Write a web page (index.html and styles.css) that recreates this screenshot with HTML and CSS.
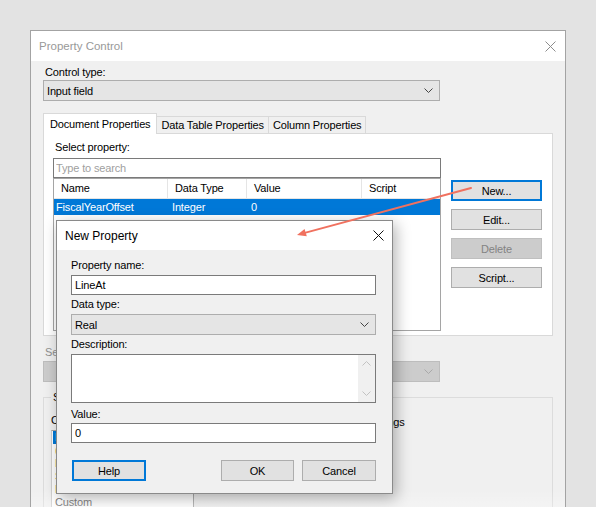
FILE: index.html
```html
<!DOCTYPE html>
<html lang="en">
<head>
    <meta charset="UTF-8" />
    <title>Property Control</title>
    <link rel="stylesheet" href="styles.css">
</head>
<body>
    <div class="window">
        <div class="titlebar">
            <span class="title">Property Control</span>
            <svg class="close-icon" width="11" height="11" viewBox="0 0 11 11">
                <path d="M0.5 0.5L10.5 10.5M10.5 0.5L0.5 10.5" stroke="#8c8c8c" stroke-width="1" fill="none"/>
            </svg>
        </div>

        <div class="window-body">
            <label class="field-label">Control type:</label>
            <div class="select wide">
                <span>Input field</span>
                <svg class="chevron" width="9" height="5" viewBox="0 0 9 5"><path d="M0.5 0.5L4.5 4.5L8.5 0.5" stroke="#444" fill="none"/></svg>
            </div>

            <div class="tabs">
                <div class="tab active">Document Properties</div>
                <div class="tab">Data Table Properties</div>
                <div class="tab">Column Properties</div>
            </div>

            <div class="tab-panel">
                <div class="property-list">
                    <label class="field-label">Select property:</label>
                    <input class="textbox search" type="text" placeholder="Type to search">
                    <div class="listview">
                        <div class="lv-row lv-header">
                            <span>Name</span><span>Data Type</span><span>Value</span><span>Script</span>
                        </div>
                        <div class="lv-row selected">
                            <span>FiscalYearOffset</span><span>Integer</span><span>0</span><span></span>
                        </div>
                    </div>
                </div>
                <div class="side-buttons">
                    <button class="btn default">New...</button>
                    <button class="btn">Edit...</button>
                    <button class="btn" disabled>Delete</button>
                    <button class="btn">Script...</button>
                </div>
            </div>

            <label class="field-label disabled">Set property value through:</label>
            <div class="select wide disabled">
                <span></span>
                <svg class="chevron" width="9" height="5" viewBox="0 0 9 5"><path d="M0.5 0.5L4.5 4.5L8.5 0.5" stroke="#a9a9a9" fill="none"/></svg>
            </div>

            <fieldset class="group">
                <legend>Style</legend>
                <div class="group-grid">
                    <div>
                        <label class="field-label style-label">Choose style:</label>
                        <div class="style-list">
                            <div class="style-item selected">Default</div>
                            <div class="style-item orange">(None)</div>
                            <div class="style-item orange">Light</div>
                            <div class="style-item orange">Subtle</div>
                            <div class="style-item orange">Lined</div>
                            <div class="style-item">Custom</div>
                        </div>
                    </div>
                    <div>
                        <label class="field-label preview-label">Preview of the selected style settings</label>
                    </div>
                </div>
            </fieldset>
            <div class="fade"></div>
        </div>
    </div>

    <!-- modal on top of the property control window -->
    <div class="dialog">
        <div class="dialog-titlebar">
            <span>New Property</span>
            <svg width="11" height="11" viewBox="0 0 11 11">
                <path d="M0.5 0.5L10.5 10.5M10.5 0.5L0.5 10.5" stroke="#111" stroke-width="1" fill="none"/>
            </svg>
        </div>
        <div class="dialog-body">
            <label class="field-label">Property name:</label>
            <input class="textbox" type="text" value="LineAt">

            <label class="field-label gap-1">Data type:</label>
            <div class="select">
                <span>Real</span>
                <svg class="chevron" width="9" height="5" viewBox="0 0 9 5"><path d="M0.5 0.5L4.5 4.5L8.5 0.5" stroke="#444" fill="none"/></svg>
            </div>

            <label class="field-label gap-1">Description:</label>
            <div class="textarea">
                <div class="textarea-text"></div>
                <div class="scrollbar">
                    <svg width="9" height="5" viewBox="0 0 9 5"><path d="M0.5 4.5L4.5 0.5L8.5 4.5" stroke="#c2c2c2" fill="none"/></svg>
                    <svg width="9" height="5" viewBox="0 0 9 5"><path d="M0.5 0.5L4.5 4.5L8.5 0.5" stroke="#c2c2c2" fill="none"/></svg>
                </div>
            </div>

            <label class="field-label gap-3">Value:</label>
            <input class="textbox" type="text" value="0">

            <div class="dialog-buttons">
                <button class="btn default help">Help</button>
                <button class="btn ok">OK</button>
                <button class="btn cancel">Cancel</button>
            </div>
        </div>
    </div>

    <svg class="annotation" width="596" height="507" viewBox="0 0 596 507">
        <line x1="471" y1="188" x2="305.7" y2="232.6" stroke="#f0715f" stroke-width="2" stroke-linecap="round"/>
        <polygon points="297,235 306.8,236.2 304.6,229.1" fill="#f0715f"/>
    </svg>
</body>
</html>
```

FILE: styles.css
```css
* {
    box-sizing: border-box;
}

html, body {
    margin: 0;
    height: 100%;
}

body {
    background-color: #e3e3e3;
    font-family: 'Liberation Sans', Arial, sans-serif;
    font-size: 11px;
    letter-spacing: -0.15px;
    color: #000;
    overflow: hidden;
    position: relative;
}

/* main window */

.window {
    margin: 30px 0 0 30px;
    width: 536px;
    height: 500px;
    border: 1px solid #a3a3a3;
    background-color: #f0f0f0;
}

.titlebar {
    height: 30px;
    background-color: #fff;
    display: flex;
    align-items: center;
    justify-content: space-between;
    padding: 0 9px 0 8px;
}

.title {
    color: #999;
    font-size: 11.5px;
    letter-spacing: 0;
}

.window-body {
    position: relative;
    padding: 3px 12px 0 12px;
    height: 469px;
}

.field-label {
    display: block;
    line-height: 16px;
}

.window-body > .field-label,
.tab-panel .field-label {
    padding-left: 2px;
}

.field-label.disabled {
    color: #8f8f8f;
    margin-top: 8px;
}

.select {
    height: 21px;
    background-color: #e5e5e5;
    border: 1px solid #adadad;
    display: flex;
    align-items: center;
    justify-content: space-between;
    padding: 0 6px 0 3px;
}

.select.wide {
    width: 397px;
}

.select.disabled {
    background-color: #cccccc;
    border-color: #bdbdbd;
    margin-top: 1px;
}

/* tabs */

.tabs {
    display: flex;
    align-items: flex-end;
    height: 20px;
    margin-top: 12px;
}

.tab {
    height: 17px;
    line-height: 16px;
    padding: 0 4px;
    border: 1px solid #d9d9d9;
    border-bottom: none;
    margin-left: -1px;
    background-color: #f0f0f0;
}

.tab.active {
    position: relative;
    z-index: 1;
    height: 21px;
    margin-bottom: -1px;
    margin-left: 0;
    padding: 2px 6px 0 6px;
    background-color: #fff;
}

.tab-panel {
    height: 203px;
    background-color: #fff;
    border: 1px solid #d9d9d9;
    padding: 5px 9px 0 9px;
    display: flex;
    gap: 10px;
}

.property-list {
    width: 388px;
}

.property-list .field-label {
    margin-bottom: 3px;
}

.textbox {
    display: block;
    width: 100%;
    height: 20px;
    margin: 0;
    padding: 0 3px;
    border: 1px solid #7a7a7a;
    background-color: #fff;
    font-family: inherit;
    font-size: inherit;
    letter-spacing: inherit;
    color: #000;
    outline: none;
}

.search {
    padding-left: 2px;
}

.search::placeholder {
    color: #a0a0a0;
}

.listview {
    height: 153px;
    border: 1px solid #a5a5a5;
    background-color: #fff;
}

.lv-row {
    display: grid;
    grid-template-columns: 114px 79px 115px 1fr;
}

.lv-header {
    height: 20px;
    line-height: 19px;
    border-bottom: 1px solid #e5e5e5;
}

.lv-header span {
    padding-left: 7px;
    border-right: 1px solid #e5e5e5;
}

.lv-header span:last-child {
    border-right: none;
}

.lv-row.selected {
    height: 16px;
    line-height: 16px;
    background-color: #0078d7;
    color: #fff;
}

.lv-row.selected span {
    padding-left: 4px;
}

.lv-row.selected span:first-child {
    padding-left: 2px;
}

.side-buttons {
    display: flex;
    flex-direction: column;
    gap: 8px;
    margin-top: 41px;
}

.btn {
    width: 91px;
    height: 21px;
    padding: 0;
    border: 1px solid #adadad;
    background-color: #e1e1e1;
    font-family: inherit;
    font-size: inherit;
    letter-spacing: inherit;
    color: #000;
}

.btn.default {
    border: 2px solid #0078d7;
}

.btn:disabled {
    background-color: #cccccc;
    border-color: #bfbfbf;
    color: #838383;
}

/* style group */

.group {
    margin: 7px 0 0 0;
    padding: 0 8px 0 7px;
    border: 1px solid #dcdcdc;
    height: 140px;
}

.group legend {
    padding: 0 2px;
    line-height: 16px;
}

.group-grid {
    display: grid;
    grid-template-columns: 143px 1fr;
    column-gap: 10px;
}

.style-label {
    margin: 7px 0 2px 0;
}

.preview-label {
    margin: 9px 0 0 26px;
}

.style-list {
    height: 90px;
    border: 1px solid #a5a5a5;
    border-left-color: #d0d0d0;
    background-color: #fff;
    padding: 0 1px;
}

.style-item {
    line-height: 13px;
    height: 13px;
    padding-left: 2px;
    color: #6a6a6a;
}

.style-item.selected {
    background-color: #0078d7;
    color: #fff;
}

.style-item.orange {
    color: #d39236;
}

.fade {
    position: absolute;
    left: 0;
    right: 0;
    bottom: 0;
    height: 40px;
    background: linear-gradient(rgba(255, 255, 255, 0), rgba(255, 255, 255, 0.6));
}

/* new property dialog */

.dialog {
    position: absolute;
    left: 56px;
    top: 220px;
    width: 337px;
    height: 274px;
    border: 1px solid #8a8a8a;
    background-color: #f0f0f0;
    box-shadow: 3px 4px 14px rgba(0, 0, 0, 0.3);
}

.dialog-titlebar {
    height: 29px;
    background-color: #fff;
    display: flex;
    align-items: center;
    justify-content: space-between;
    padding: 0 8px 0 8px;
    font-size: 12px;
    letter-spacing: 0;
}

.dialog-body {
    padding: 7px 16px 12px 14px;
}

.dialog-body .field-label {
    margin-bottom: 2px;
}

.dialog-body .field-label.gap-1 {
    margin-top: 1px;
}

.dialog-body .field-label.gap-3 {
    margin-top: 3px;
    margin-bottom: 1px;
}

.textarea {
    height: 49px;
    border: 1px solid #7a7a7a;
    background-color: #fff;
    display: flex;
}

.textarea-text {
    flex: 1;
}

.scrollbar {
    width: 17px;
    background-color: #f0f0f0;
    display: flex;
    flex-direction: column;
    justify-content: space-between;
    align-items: center;
    padding: 6px 0 6px 0;
}

.dialog-buttons {
    display: flex;
    margin-top: 17px;
}

.dialog-buttons .help {
    width: 74px;
    margin-left: 1px;
    margin-right: auto;
}

.dialog-buttons .ok {
    width: 73px;
}

.dialog-buttons .cancel {
    width: 74px;
    margin-left: 8px;
}

.annotation {
    position: absolute;
    left: 0;
    top: 0;
    pointer-events: none;
}
```
